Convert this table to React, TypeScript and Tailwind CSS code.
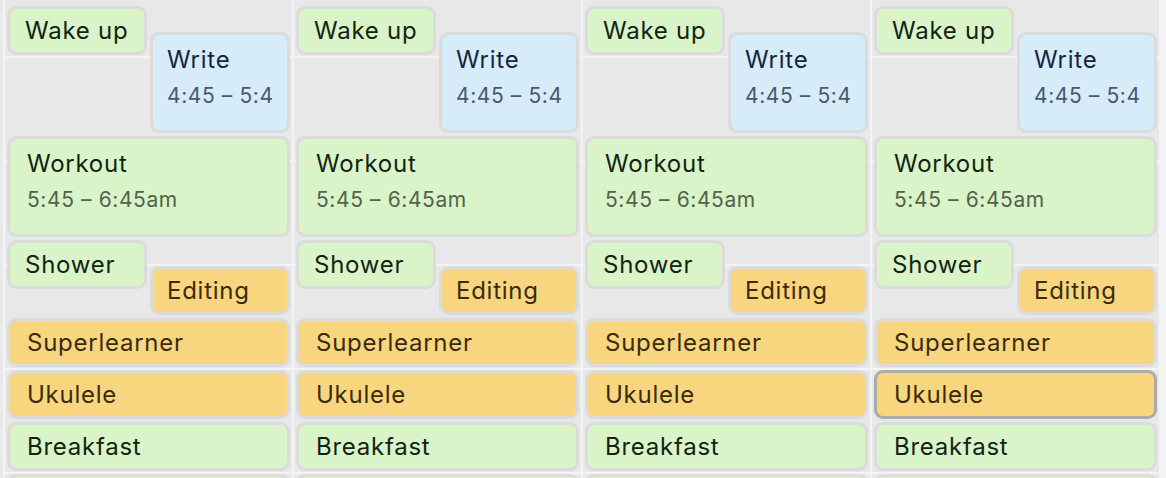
import React from 'react';

type Lane = 'full' | 'left' | 'right';
type Tone = 'green' | 'blue' | 'yellow';

interface CalEvent {
  title: string;
  start: number; // hours, e.g. 4.5 = 4:30
  end: number;
  time?: string;
  tone: Tone;
  lane: Lane;
}

// one hour = 104px, the 5:00 line sits at y=57
const HOUR = 104;
const yOf = (h: number) => 57 + (h - 5) * HOUR;

const events: CalEvent[] = [
  { title: 'Wake up', start: 4.5, end: 5, tone: 'green', lane: 'left' },
  { title: 'Write', start: 4.75, end: 5.75, time: '4:45 – 5:45am', tone: 'blue', lane: 'right' },
  { title: 'Workout', start: 5.75, end: 6.75, time: '5:45 – 6:45am', tone: 'green', lane: 'full' },
  { title: 'Shower', start: 6.75, end: 7.25, tone: 'green', lane: 'left' },
  { title: 'Editing', start: 7, end: 7.5, tone: 'yellow', lane: 'right' },
  { title: 'Superlearner', start: 7.5, end: 8, tone: 'yellow', lane: 'full' },
  { title: 'Ukulele', start: 8, end: 8.5, tone: 'yellow', lane: 'full' },
  { title: 'Breakfast', start: 8.5, end: 9, tone: 'green', lane: 'full' },
  // next block only peeks in at the bottom edge
  { title: '', start: 9, end: 9.5, tone: 'green', lane: 'full' },
];

const toneBox: Record<Tone, string> = {
  green: 'bg-[#d9f4c9] text-[#142211]',
  blue: 'bg-[#d6edf9] text-[#17263d]',
  yellow: 'bg-[#f8d67f] text-[#3a2b0b]',
};

const toneTime: Record<Tone, string> = {
  green: 'text-[#53614d]',
  blue: 'text-[#4b586c]',
  yellow: 'text-[#6b5526]',
};

const laneClass: Record<Lane, string> = {
  full: 'left-[2px] right-[2px] pl-[17px] pr-[14px]',
  left: 'left-[2px] w-[140px] pl-[15px] pr-[14px]',
  right: 'right-[2px] w-[140px] px-[14px]',
};

const EventBox: React.FC<{ ev: CalEvent; selected?: boolean }> = ({ ev, selected }) => {
  const top = yOf(ev.start) + 1;
  const height = (ev.end - ev.start) * HOUR - 3;
  const long = !!ev.time;

  return (
    <div
      className={`absolute overflow-hidden rounded-[9px] border-[3px] ${
        selected ? 'border-[#ababab]' : 'border-[#dbdbdb]'
      } ${toneBox[ev.tone]} ${laneClass[ev.lane]} ${long ? 'pt-[11px]' : 'flex items-center'}`}
      style={{ top, height }}
    >
      <div className="w-full min-w-0">
        <div className="whitespace-nowrap overflow-hidden text-[24px] leading-[28px] tracking-[0.75px]">{ev.title}</div>
        {ev.time && (
          <div
            className={`mt-[10px] whitespace-nowrap overflow-hidden text-[21px] leading-[24px] tracking-[0.6px] ${toneTime[ev.tone]}`}
          >
            {ev.time}
          </div>
        )}
      </div>
    </div>
  );
};

const DayColumn: React.FC<{ selectedTitle?: string }> = ({ selectedTitle }) => (
  <div className="relative h-full w-[287px] shrink-0">
    {/* hour lines */}
    <div className="flex flex-col">
      <div className="h-[56px]" />
      {[0, 1, 2, 3, 4].map((i) => (
        <div key={i} className="h-[104px] border-t-2 border-[#f4f4f4]" />
      ))}
    </div>
    {events.map((ev, i) => (
      <EventBox key={i} ev={ev} selected={ev.title === selectedTitle} />
    ))}
  </div>
);

const Divider = () => <div className="w-[2px] shrink-0 bg-[#f4f4f4]" />;

export default function App() {
  return (
    <div
      className="flex h-[478px] w-[1166px] overflow-hidden bg-[#e8e8e8] pl-[3px]"
      style={{ fontFamily: 'Inter, "Noto Sans", sans-serif' }}
    >
      <Divider />
      <DayColumn />
      <Divider />
      <DayColumn />
      <Divider />
      <DayColumn />
      <Divider />
      <DayColumn selectedTitle="Ukulele" />
      <div className="flex-1 bg-[#f4f4f4]" />
    </div>
  );
}
